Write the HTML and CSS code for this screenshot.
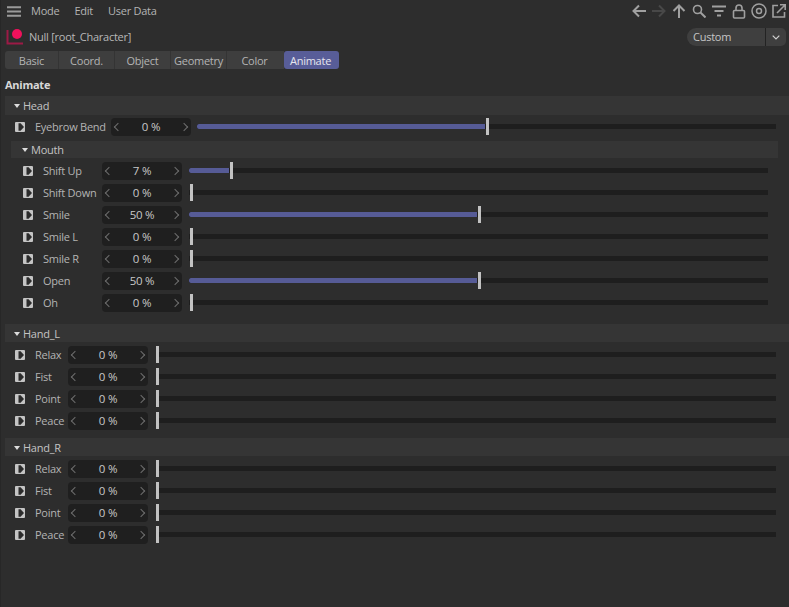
FILE: index.html
```html
<!DOCTYPE html>
<html lang="en">
<head>
<meta charset="utf-8">
<title>Animate</title>
<link rel="stylesheet" href="styles.css">
</head>
<body>
<svg class="defs" width="0" height="0" aria-hidden="true">
  <symbol id="play" viewBox="0 0 10 10">
    <rect width="10" height="10" rx="1" fill="#c4c4c4"/>
    <path d="M3.5 1.2H5.6L9 5 5.6 8.8H3.5Z" fill="#2b2b2b"/>
  </symbol>
</svg>
<div class="panel">
  <header class="menubar">
    <svg class="burger" width="14" height="11" viewBox="0 0 14 11"><path d="M0 1.200H14M0 5.500H14M0 9.800H14" stroke="#9a9a9a" stroke-width="2"/></svg>
    <nav class="menu"><span>Mode</span><span>Edit</span><span>User Data</span></nav>
    <div class="tools">
      <svg width="14" height="14" viewBox="0 0 14 14"><path d="M14 7H1.500M7 1.500 1.500 7 7 12.500" fill="none" stroke="#a0a0a0" stroke-width="2"/></svg>
      <svg width="14" height="14" viewBox="0 0 14 14"><path d="M0 7H12.500M7 1.500 12.500 7 7 12.500" fill="none" stroke="#484848" stroke-width="2"/></svg>
      <svg width="14" height="14" viewBox="0 0 14 14"><path d="M7 14V1.500M1.500 7 7 1.500 12.500 7" fill="none" stroke="#a0a0a0" stroke-width="2"/></svg>
      <svg width="14" height="14" viewBox="0 0 14 14"><circle cx="5.500" cy="5.500" r="4" fill="none" stroke="#a0a0a0" stroke-width="1.600"/><path d="M8.500 8.500 13.500 13.500" stroke="#a0a0a0" stroke-width="2"/></svg>
      <svg width="14" height="12" viewBox="0 0 14 12"><path d="M0 1.500H14M2.500 6H11.500M5 10.500H9" stroke="#a0a0a0" stroke-width="2"/></svg>
      <svg width="14" height="15" viewBox="0 0 14 15"><rect x="1.500" y="6.500" width="11" height="7.500" rx="1" fill="none" stroke="#a0a0a0" stroke-width="1.600"/><path d="M4 6.500V4a3 3 0 0 1 6 0v2.500" fill="none" stroke="#a0a0a0" stroke-width="1.600"/></svg>
      <svg class="target" width="16" height="16" viewBox="0 0 16 16"><circle cx="8" cy="8" r="7" fill="none" stroke="#a0a0a0" stroke-width="1.500"/><circle cx="8" cy="8" r="2.500" fill="none" stroke="#a0a0a0" stroke-width="1.500"/></svg>
      <svg width="14" height="14" viewBox="0 0 14 14"><path d="M6 1.500H1V13H12.500V8" fill="none" stroke="#a0a0a0" stroke-width="1.600"/><path d="M5 9 13 1M8 .8H13.200V6" fill="none" stroke="#a0a0a0" stroke-width="1.600"/></svg>
    </div>
  </header>

  <div class="titlebar">
    <svg class="nullicon" width="18" height="18" viewBox="0 0 18 18"><path d="M1.500 2V15.500H17" fill="none" stroke="#9c1a46" stroke-width="2"/><circle cx="11" cy="6" r="5" fill="#f0115c"/></svg>
    <span class="objname">Null [root_Character]</span>
    <div class="dropdown"><span class="dropvalue">Custom</span><span class="dropbtn"><svg width="8" height="5" viewBox="0 0 8 5"><path d="M.7.700 4 4 7.300.700" fill="none" stroke="#d0d0d0" stroke-width="1.200"/></svg></span></div>
  </div>

  <div class="tabs">
    <span class="tab">Basic</span>
    <span class="tab">Coord.</span>
    <span class="tab">Object</span>
    <span class="tab">Geometry</span>
    <span class="tab">Color</span>
    <span class="tab active">Animate</span>
  </div>

  <h1 class="section">Animate</h1>

  <section class="group">
    <h2 class="ghead"><i class="tri"></i>Head</h2>
    <div class="row wide">
      <svg class="ico"><use href="#play"/></svg><span class="label">Eyebrow Bend</span>
      <div class="field"><b class="ch l"></b><span>0 %</span><b class="ch r"></b></div>
      <div class="track"><div class="fill" style="width:50%"></div><div class="grip"></div></div>
    </div>
  </section>

  <section class="group sub">
    <h2 class="ghead"><i class="tri"></i>Mouth</h2>
    <div class="row mid"><svg class="ico"><use href="#play"/></svg><span class="label">Shift Up</span><div class="field"><b class="ch l"></b><span>7 %</span><b class="ch r"></b></div><div class="track"><div class="fill" style="width:7%"></div><div class="grip"></div></div></div>
    <div class="row mid"><svg class="ico"><use href="#play"/></svg><span class="label">Shift Down</span><div class="field"><b class="ch l"></b><span>0 %</span><b class="ch r"></b></div><div class="track"><div class="fill" style="width:0%"></div><div class="grip"></div></div></div>
    <div class="row mid"><svg class="ico"><use href="#play"/></svg><span class="label">Smile</span><div class="field"><b class="ch l"></b><span>50 %</span><b class="ch r"></b></div><div class="track"><div class="fill" style="width:50%"></div><div class="grip"></div></div></div>
    <div class="row mid"><svg class="ico"><use href="#play"/></svg><span class="label">Smile L</span><div class="field"><b class="ch l"></b><span>0 %</span><b class="ch r"></b></div><div class="track"><div class="fill" style="width:0%"></div><div class="grip"></div></div></div>
    <div class="row mid"><svg class="ico"><use href="#play"/></svg><span class="label">Smile R</span><div class="field"><b class="ch l"></b><span>0 %</span><b class="ch r"></b></div><div class="track"><div class="fill" style="width:0%"></div><div class="grip"></div></div></div>
    <div class="row mid"><svg class="ico"><use href="#play"/></svg><span class="label">Open</span><div class="field"><b class="ch l"></b><span>50 %</span><b class="ch r"></b></div><div class="track"><div class="fill" style="width:50%"></div><div class="grip"></div></div></div>
    <div class="row mid"><svg class="ico"><use href="#play"/></svg><span class="label">Oh</span><div class="field"><b class="ch l"></b><span>0 %</span><b class="ch r"></b></div><div class="track"><div class="fill" style="width:0%"></div><div class="grip"></div></div></div>
  </section>

  <section class="group hand">
    <h2 class="ghead"><i class="tri"></i>Hand_L</h2>
    <div class="row narrow"><svg class="ico"><use href="#play"/></svg><span class="label">Relax</span><div class="field"><b class="ch l"></b><span>0 %</span><b class="ch r"></b></div><div class="track"><div class="fill" style="width:0%"></div><div class="grip"></div></div></div>
    <div class="row narrow"><svg class="ico"><use href="#play"/></svg><span class="label">Fist</span><div class="field"><b class="ch l"></b><span>0 %</span><b class="ch r"></b></div><div class="track"><div class="fill" style="width:0%"></div><div class="grip"></div></div></div>
    <div class="row narrow"><svg class="ico"><use href="#play"/></svg><span class="label">Point</span><div class="field"><b class="ch l"></b><span>0 %</span><b class="ch r"></b></div><div class="track"><div class="fill" style="width:0%"></div><div class="grip"></div></div></div>
    <div class="row narrow"><svg class="ico"><use href="#play"/></svg><span class="label">Peace</span><div class="field"><b class="ch l"></b><span>0 %</span><b class="ch r"></b></div><div class="track"><div class="fill" style="width:0%"></div><div class="grip"></div></div></div>
  </section>

  <section class="group hand second">
    <h2 class="ghead"><i class="tri"></i>Hand_R</h2>
    <div class="row narrow"><svg class="ico"><use href="#play"/></svg><span class="label">Relax</span><div class="field"><b class="ch l"></b><span>0 %</span><b class="ch r"></b></div><div class="track"><div class="fill" style="width:0%"></div><div class="grip"></div></div></div>
    <div class="row narrow"><svg class="ico"><use href="#play"/></svg><span class="label">Fist</span><div class="field"><b class="ch l"></b><span>0 %</span><b class="ch r"></b></div><div class="track"><div class="fill" style="width:0%"></div><div class="grip"></div></div></div>
    <div class="row narrow"><svg class="ico"><use href="#play"/></svg><span class="label">Point</span><div class="field"><b class="ch l"></b><span>0 %</span><b class="ch r"></b></div><div class="track"><div class="fill" style="width:0%"></div><div class="grip"></div></div></div>
    <div class="row narrow"><svg class="ico"><use href="#play"/></svg><span class="label">Peace</span><div class="field"><b class="ch l"></b><span>0 %</span><b class="ch r"></b></div><div class="track"><div class="fill" style="width:0%"></div><div class="grip"></div></div></div>
  </section>
</div>
</body>
</html>
```
FILE: styles.css
```css
* { box-sizing: border-box; }
html, body { margin: 0; height: 100%; }
body {
  background: #2d2d2d;
  color: #bdbdbd;
  font: 11px/14px "Open Sans", "Liberation Sans", sans-serif;
  letter-spacing: -.25px;
  overflow: hidden;
}
.defs { position: absolute; }
.panel { width: 789px; height: 607px; border-left: 1px solid #272727; }

.menubar { display: flex; align-items: center; height: 22px; padding-left: 6px; }
.burger { display: block; }
.menu { display: flex; gap: 15px; margin-left: 10px; color: #b4b4b4; }
.tools { display: flex; align-items: center; gap: 6px; margin-left: auto; padding-right: 3px; }
.tools svg { display: block; }
.tools .target { margin: 0 -1px; }

.titlebar { display: flex; align-items: center; height: 18px; margin-top: 6px; padding-left: 5px; }
.nullicon { display: block; }
.objname { margin-left: 5px; color: #b8b8b8; }
.dropdown { display: flex; width: 99px; height: 18px; margin-left: auto; margin-right: 3px; background: #3f3f3f; border-radius: 9px 5px 5px 9px; color: #c6c6c6; }
.dropvalue { flex: 1; padding: 2px 0 0 6px; border-right: 1px solid #232323; }
.dropbtn { display: flex; align-items: center; justify-content: center; width: 20px; }

.tabs { display: flex; height: 18px; margin-top: 5px; padding-left: 4px; }
.tab { width: 56px; background: #3e3e3e; border-right: 1px solid #343434; color: #b4b4b4; text-align: center; line-height: 20px; }
.tab:first-child { width: 54px; border-radius: 3px 0 0 3px; }
.tab:nth-child(5) { width: 57px; padding-right: 2px; border-right: 0; }
.tab.active { width: 55px; padding-right: 2px; background: #585d98; color: #e6e6ee; border: 0; border-radius: 3px; }

.section { margin: 9px 0 0 4px; font-size: 11px; line-height: 14px; font-weight: 700; color: #d8d8d8; }

.group { margin-top: 4px; }
.ghead { display: flex; align-items: center; height: 19px; margin: 0 0 1px 4px; padding-left: 9px; background: #353535; font-size: 11px; font-weight: 400; color: #c4c4c4; }
.tri { width: 0; height: 0; margin-right: 3px; border: 3.500px solid transparent; border-top: 4px solid #dcdcdc; border-bottom: 0; }

.sub { margin: 3px 11px 0 0; }
.sub .ghead { height: 17px; margin: 0 0 2px 10px; padding-left: 11px; }
.hand { margin-top: 10px; }
.hand .ghead { height: 18px; margin-bottom: 2px; padding-top: 2px; }
.second { margin-top: 6px; }

.row { display: flex; align-items: center; height: 22px; padding-left: 14px; }
.ico { flex: none; width: 10px; height: 10px; }
.label { flex: none; margin-left: 10px; color: #b4b4b4; white-space: nowrap; }
.field { flex: none; display: flex; align-items: center; justify-content: space-between; width: 80px; height: 18px; padding: 0 4px; background: #1f1f1f; border-radius: 4px; color: #c8c8c8; font-size: 11.500px; }
.field span { flex: 1; text-align: center; }
.ch { display: block; width: 6px; height: 6px; border-left: 1px solid #6e6e6e; border-bottom: 1px solid #6e6e6e; }
.ch.l { transform: rotate(45deg); }
.ch.r { transform: rotate(225deg); }

.track { flex: none; display: flex; align-items: center; height: 5px; margin-bottom: 1px; padding-right: 4px; background: #1e1e1e; }
.fill { height: 5px; background: #565b96; border-radius: 2px 0 0 2px; }
.grip { flex: none; width: 3px; height: 17px; margin-left: 1px; background: #c2c2c2; }

.wide .label { width: 76px; }
.wide .track { width: 579px; margin-left: 6px; }
.mid { padding-left: 22px; }
.mid .label { width: 59px; }
.mid .track { width: 579px; margin-left: 7px; }
.narrow .label { width: 33px; }
.narrow .track { width: 620px; margin-left: 8px; }
.narrow .grip { margin-left: 0; }
```
